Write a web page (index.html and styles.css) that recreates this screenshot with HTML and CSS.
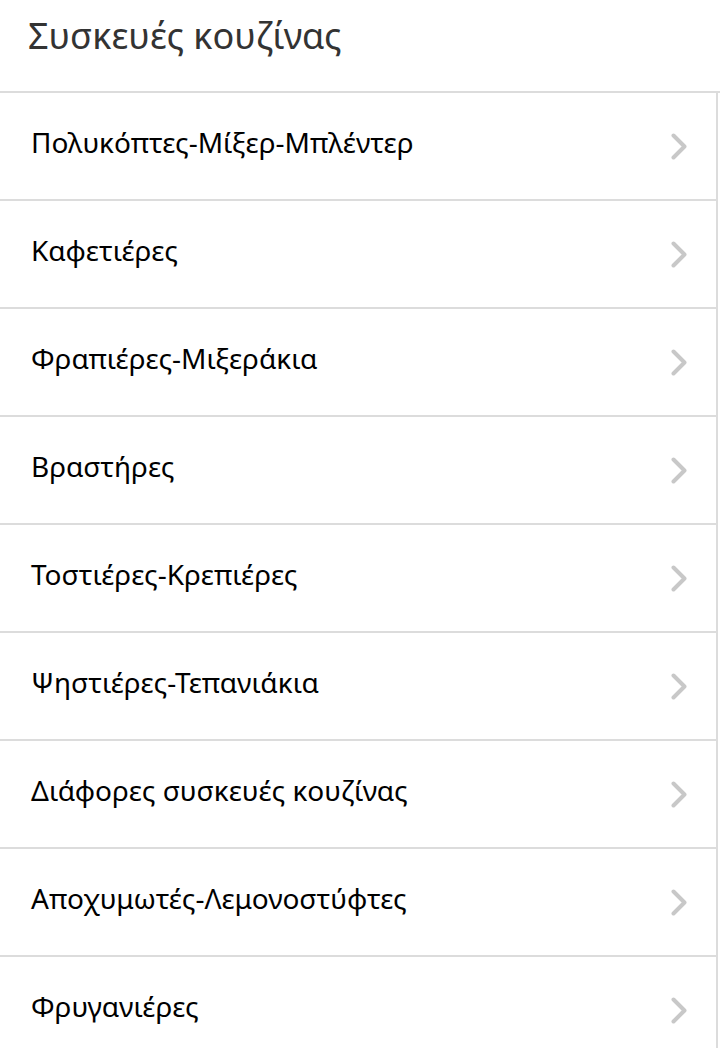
FILE: index.html
```html
<!DOCTYPE html>
<html lang="el">
<head>
    <meta charset="UTF-8">
    <meta name="viewport" content="width=device-width, initial-scale=1.0">
    <title>Συσκευές κουζίνας</title>
    <link rel="stylesheet" href="styles.css">
</head>
<body>
    <div class="header">
        <h1>Συσκευές κουζίνας</h1>
    </div>
    <ul class="list">
        <li class="row"><span class="label">Πολυκόπτες-Μίξερ-Μπλέντερ</span><svg class="chevron" viewBox="0 0 16 27"><polyline points="2.5,2.5 13.5,13.5 2.5,24.5"/></svg></li>
        <li class="row"><span class="label">Καφετιέρες</span><svg class="chevron" viewBox="0 0 16 27"><polyline points="2.5,2.5 13.5,13.5 2.5,24.5"/></svg></li>
        <li class="row"><span class="label">Φραπιέρες-Μιξεράκια</span><svg class="chevron" viewBox="0 0 16 27"><polyline points="2.5,2.5 13.5,13.5 2.5,24.5"/></svg></li>
        <li class="row"><span class="label">Βραστήρες</span><svg class="chevron" viewBox="0 0 16 27"><polyline points="2.5,2.5 13.5,13.5 2.5,24.5"/></svg></li>
        <li class="row"><span class="label">Τοστιέρες-Κρεπιέρες</span><svg class="chevron" viewBox="0 0 16 27"><polyline points="2.5,2.5 13.5,13.5 2.5,24.5"/></svg></li>
        <li class="row"><span class="label">Ψηστιέρες-Τεπανιάκια</span><svg class="chevron" viewBox="0 0 16 27"><polyline points="2.5,2.5 13.5,13.5 2.5,24.5"/></svg></li>
        <li class="row"><span class="label">Διάφορες συσκευές κουζίνας</span><svg class="chevron" viewBox="0 0 16 27"><polyline points="2.5,2.5 13.5,13.5 2.5,24.5"/></svg></li>
        <li class="row"><span class="label">Αποχυμωτές-Λεμονοστύφτες</span><svg class="chevron" viewBox="0 0 16 27"><polyline points="2.5,2.5 13.5,13.5 2.5,24.5"/></svg></li>
        <li class="row"><span class="label">Φρυγανιέρες</span><svg class="chevron" viewBox="0 0 16 27"><polyline points="2.5,2.5 13.5,13.5 2.5,24.5"/></svg></li>
    </ul>
</body>
</html>
```

FILE: styles.css
```css
body
{
    margin: 0;
    padding: 0;
    background: #fff;
    font-family: "Noto Sans", "Open Sans", sans-serif;
    overflow: hidden;
}

.header
{
    height: 91px;
    border-bottom: 2px solid #dcdcdc;
}

h1
{
    margin: 0;
    padding: 11px 0 0 28px;
    font-size: 36px;
    font-weight: normal;
    line-height: 49px;
    color: #333;
}

.list
{
    list-style: none;
    margin: 0;
    padding: 0;
    width: 716px;
    border-right: 2px solid #dcdcdc;
}

.row
{
    display: flex;
    align-items: center;
    justify-content: space-between;
    height: 106px;
    border-bottom: 2px solid #dcdcdc;
    padding: 0 29px 0 31px;
}

.label
{
    font-size: 28px;
    line-height: 38px;
    color: #000;
    margin-top: -8px;
}

.chevron
{
    width: 16px;
    height: 27px;
}

.chevron polyline
{
    fill: none;
    stroke: #c8c8c8;
    stroke-width: 4;
    stroke-linecap: round;
    stroke-linejoin: round;
}
```
